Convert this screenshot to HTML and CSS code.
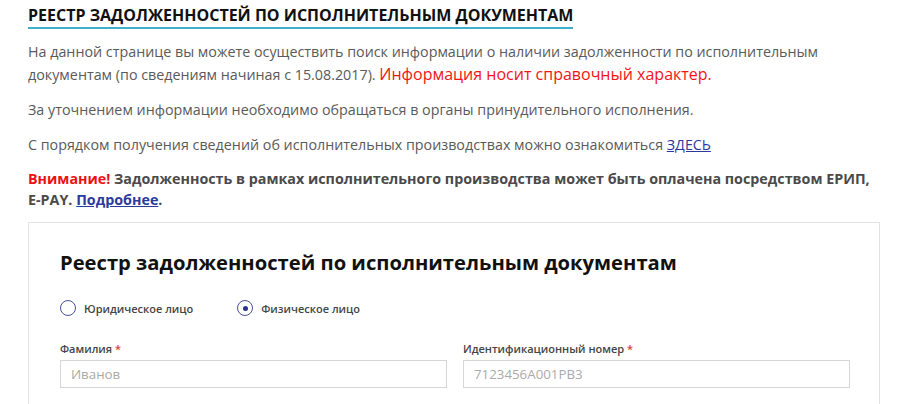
FILE: index.html
```html
<!DOCTYPE html>
<html lang="ru">
<head>
<meta charset="utf-8">
<link rel="stylesheet" href="styles.css">
</head>
<body>
<div class="page">
  <h1 class="title">Реестр задолженностей по исполнительным документам</h1>
  <p class="text">На данной странице вы можете осуществить поиск информации о наличии задолженности по исполнительным документам (по сведениям начиная с 15.08.2017). <span class="red">Информация носит справочный характер.</span></p>
  <p class="text">За уточнением информации необходимо обращаться в органы принудительного исполнения.</p>
  <p class="text">С порядком получения сведений об исполнительных производствах можно ознакомиться <a href="#" class="link">ЗДЕСЬ</a></p>
  <p class="text bold"><span class="warn">Внимание!</span> Задолженность в рамках исполнительного производства может быть оплачена посредством ЕРИП, <span class="nowrap">E-PAY.</span> <a href="#" class="link">Подробнее</a>.</p>

  <div class="card">
    <h2 class="card-title">Реестр задолженностей по исполнительным документам</h2>
    <div class="radios">
      <label class="radio"><span class="circle"></span>Юридическое лицо</label>
      <label class="radio"><span class="circle checked"></span>Физическое лицо</label>
    </div>
    <div class="fields">
      <div class="field">
        <div class="label">Фамилия <span class="req">*</span></div>
        <div class="input">Иванов</div>
      </div>
      <div class="field">
        <div class="label">Идентификационный номер <span class="req">*</span></div>
        <div class="input">7123456A001PB3</div>
      </div>
    </div>
  </div>
</div>
</body>
</html>
```
FILE: styles.css
```css
html, body {
  margin: 0;
  padding: 0;
  background: #fff;
}
body {
  font-family: "Open Sans", "Liberation Sans", sans-serif;
  color: #555;
  overflow: hidden;
}
.page {
  padding: 4px 8px 0 28px;
}
.title {
  display: inline-block;
  margin: 0;
  font-size: 16px;
  font-weight: 700;
  text-transform: uppercase;
  color: #111;
  line-height: 22px;
  padding-bottom: 1px;
  border-bottom: 2px solid #3fb0c9;
}
.text {
  margin: 11px 0 0;
  font-size: 14.3px;
  line-height: 23px;
  color: #5a5a5a;
}
.text + .text {
  margin-top: 12px;
}
.red {
  color: #f21515;
  font-size: 16px;
  line-height: 20px;
}
.link {
  color: #2d3a9c;
  text-decoration: underline;
}
.nowrap {
  white-space: nowrap;
}
.bold {
  font-weight: 700;
  font-size: 14.3px;
  line-height: 21px;
  color: #4a4a4a;
}
.warn {
  color: #ee1111;
}
.card {
  margin-top: 12px;
  width: 852px;
  box-sizing: border-box;
  border: 1px solid #e3e3e3;
  padding: 24px 31px 20px;
}
.card-title {
  margin: 0;
  font-size: 20.2px;
  font-weight: 700;
  color: #111;
  line-height: 30px;
}
.radios {
  display: flex;
  gap: 44px;
  margin-top: 23px;
}
.radio {
  display: flex;
  align-items: center;
  gap: 8px;
  font-size: 11px;
  font-weight: 600;
  color: #444;
}
.circle {
  width: 16px;
  height: 16px;
  box-sizing: border-box;
  border: 1.5px solid #4a4f9a;
  border-radius: 50%;
  display: flex;
  align-items: center;
  justify-content: center;
}
.checked::after {
  content: "";
  width: 5px;
  height: 5px;
  border-radius: 50%;
  background: #2a3290;
}
.fields {
  display: grid;
  grid-template-columns: 387px 387px;
  column-gap: 16px;
  margin-top: 25px;
}
.label {
  font-size: 11px;
  font-weight: 600;
  color: #444;
  line-height: 16px;
  margin-bottom: 3px;
}
.req {
  color: #e23a3a;
}
.input {
  height: 28px;
  box-sizing: border-box;
  border: 1px solid #d6d6d6;
  padding: 0 10px;
  font-size: 13.3px;
  line-height: 26px;
  color: #aaa;
}
```
